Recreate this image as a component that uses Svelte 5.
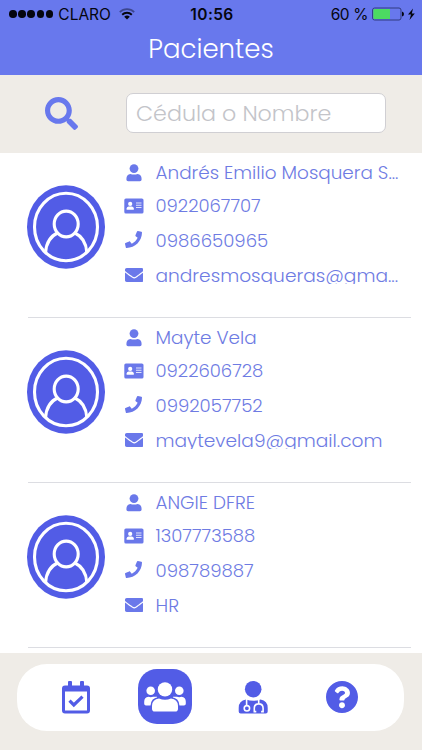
<script>
	let query = $state('')

	const patients = [
		{
			name: 'Andrés Emilio Mosquera S...',
			card: '0922067707',
			phone: '0986650965',
			email: 'andresmosqueras@gma...'
		},
		{
			name: 'Mayte Vela',
			card: '0922606728',
			phone: '0992057752',
			email: 'maytevela9@gmail.com'
		},
		{
			name: 'ANGIE DFRE',
			card: '1307773588',
			phone: '098789887',
			email: 'HR'
		}
	]

	const fields = ['name', 'card', 'phone', 'email']
</script>

<div class="app">
	<header>
		<div class="status">
			<div class="carrier">
				<span class="dots">
					{#each Array(5) as _}<i></i>{/each}
				</span>
				<span class="operator">CLARO</span>
				<svg class="wifi" viewBox="0 0 16 12">
					<path d="M.8 4.1a10.3 10.3 0 0 1 14.4 0" fill="none" stroke="#3c468e" stroke-width="1.7" />
					<path d="M3.2 6.7a6.9 6.9 0 0 1 9.6 0" fill="none" stroke="#05060f" stroke-width="1.9" />
					<path d="M8 11.6L5.2 8.8a4 4 0 0 1 5.6 0z" fill="#05060f" />
				</svg>
			</div>
			<b class="clock">10:56</b>
			<div class="power">
				<span>60 %</span>
				<svg viewBox="0 0 43 14" width="43" height="14">
					<rect x=".6" y="1" width="28.4" height="12" rx="2" fill="none" stroke="#303a80" />
					<path d="M2.5 2H18v10H2.5a1.2 1.2 0 0 1-1.2-1.2V3.2A1.2 1.2 0 0 1 2.5 2z" fill="#4cdb62" />
					<path d="M30 4.5q2 .5 2 2.5t-2 2.5z" fill="#05060f" />
					<path d="M41 1.500L36 7.6h3L37.500 13l5.300-6.600h-3z" fill="#05060f" />
				</svg>
			</div>
		</div>
		<h1>Pacientes</h1>
	</header>

	<div class="search">
		<svg viewBox="0 0 512 512" width="33" height="33">
			<path d="M505 442.7L405.3 343c-4.5-4.5-10.6-7-17-7H372c27.6-35.3 44-79.7 44-128C416 93.1 322.9 0 208 0S0 93.1 0 208s93.1 208 208 208c48.3 0 92.7-16.4 128-44v16.3c0 6.4 2.5 12.5 7 17l99.7 99.7c9.4 9.4 24.6 9.4 33.9 0l28.3-28.3c9.4-9.4 9.4-24.6.1-34zM208 336c-70.7 0-128-57.2-128-128 0-70.7 57.2-128 128-128 70.7 0 128 57.2 128 128 0 70.7-57.2 128-128 128z" />
		</svg>
		<input bind:value={query} placeholder="Cédula o Nombre" />
	</div>

	<main>
		{#each patients as patient}
			<article>
				<svg class="avatar" viewBox="0 0 78 84">
					<ellipse cx="39" cy="42" rx="39" ry="41.7" fill="#525ce6" />
					<g fill="none" stroke="#fff" stroke-width="3.1">
						<ellipse cx="39" cy="42" rx="31.5" ry="33.7" />
						<ellipse cx="39.2" cy="39" rx="12" ry="12.9" />
						<path d="M18.6 67.5C19.2 58 23 51.5 30.5 48M59.8 67.5C59.2 58 55.4 51.5 47.9 48" />
					</g>
				</svg>
				<div class="details">
					{#each fields as field}
						<div class="line {field}">
							{#if field === 'name'}
								<svg viewBox="0 0 16 18" width="16" height="18">
									<circle cx="8" cy="4.6" r="4.4" />
									<path d="M4.4 9.9q3.6 1 7.2 0q4 .6 4 5v.7q0 1.700-1.700 1.700H2.100Q.4 17.300.4 15.600v-.7Q.4 10.500 4.400 9.900z" />
								</svg>
							{:else if field === 'card'}
								<svg viewBox="0 0 20 16" width="20" height="16">
									<rect x=".3" y=".5" width="19.2" height="15" rx="1.6" />
									<g fill="#fff">
										<circle cx="6.2" cy="5.9" r="2.1" />
										<path d="M4.500 8.500h3.400q1.900.4 1.900 2.100v1.200H2.600v-1.200q0-1.700 1.900-2.100z" />
										<path d="M12 4.500h5.500v1.100H12zM12 6.700h5.500v1.100H12zM12 8.900h5.500v1.100H12z" opacity=".8" />
									</g>
								</svg>
							{:else if field === 'phone'}
								<svg viewBox="0 0 512 512" width="17" height="17">
									<path d="M493.4 24.6l-104-24c-11.3-2.6-22.9 3.3-27.5 13.9l-48 112c-4.2 9.8-1.4 21.3 6.9 28l60.6 49.6c-36 76.7-98.9 140.5-177.2 177.2l-49.6-60.6c-6.8-8.3-18.2-11.1-28-6.9l-112 48C3.9 366.5-2 378.1.6 389.4l24 104C27.1 504.2 36.7 512 48 512c256.1 0 464-207.5 464-464 0-11.2-7.7-20.9-18.6-23.4z" />
								</svg>
							{:else}
								<svg viewBox="0 64 512 384" width="18.5" height="14">
									<path d="M502.3 190.8c3.9-3.1 9.7-.2 9.7 4.7V400c0 26.5-21.5 48-48 48H48c-26.5 0-48-21.5-48-48V195.6c0-5 5.7-7.8 9.7-4.7 22.4 17.4 52.1 39.5 154.1 113.6 21.1 15.4 56.7 47.8 92.2 47.6 35.7.3 72-32.8 92.3-47.6 102-74.1 131.6-96.3 154-113.7zM256 320c23.2.4 56.6-29.2 73.4-41.4 132.7-96.3 142.8-104.7 173.4-128.7 5.8-4.5 9.2-11.5 9.2-18.9v-19c0-26.5-21.5-48-48-48H48c-26.5 0-48 21.5-48 48v19c0 7.4 3.4 14.3 9.2 18.9 30.6 23.9 40.7 32.4 173.4 128.7 16.8 12.2 50.2 41.8 73.4 41.4z" />
								</svg>
							{/if}
							<span>{patient[field]}</span>
						</div>
					{/each}
				</div>
			</article>
		{/each}
	</main>

	<footer>
		<nav>
			<button aria-label="Citas">
				<svg viewBox="0 0 30 34" width="30" height="34">
					<path d="M4 5.5h3V2q0-1 1-1h2q1 0 1 1v3.5h8V2q0-1 1-1h2q1 0 1 1v3.5h3q3 0 3 3v22q0 3-3 3H4q-3 0-3-3v-22q0-3 3-3zM4 11.5v19h22v-19z" fill-rule="evenodd" />
					<path d="M8.500 20.700l4.300 4.300 8.700-8.300" fill="none" stroke="#525ce6" stroke-width="3.200" />
				</svg>
			</button>
			<button class="active" aria-label="Pacientes">
				<svg viewBox="0 0 42 30" width="42" height="30">
					<circle cx="6.7" cy="8.8" r="4.3" />
					<circle cx="35.3" cy="8.8" r="4.3" />
					<path d="M4.500 14.700q2.300.9 4.600 0h4v8.800H2Q.2 23.500.2 21.700v-2q0-4.600 4.300-5zM37.500 14.700q-2.300.9-4.600 0h-4v8.800H40q1.800 0 1.800-1.800v-2q0-4.600-4.300-5z" />
					<g stroke="#525ce6" stroke-width="3" paint-order="stroke">
						<path d="M15 16.600q6 2.400 12 0q6.700.8 7 7.100v3q0 2.800-2.800 2.800H10.800Q8 29.500 8 26.700v-3q.3-6.300 7-7.100z" />
						<circle cx="21" cy="7.400" r="7.200" />
					</g>
				</svg>
			</button>
			<button aria-label="Doctores">
				<svg viewBox="0 0 30 34" width="30" height="34">
					<circle cx="15.200" cy="9.200" r="8.300" />
					<path d="M8 19.500q7.500 2.600 14.500 0q7.200 1.100 7.200 8.400v3.600q0 2-2 2h-25q-2 0-2-2v-3.600q0-7.300 7.300-8.400z" />
					<g fill="none" stroke="#fff" stroke-width="1.600">
						<path d="M8.600 18.500v7" />
						<circle cx="8.900" cy="28.300" r="2.700" />
						<path d="M20.700 18.500v5.300M18.300 31.600h-2v-3.300q0-4.400 4.400-4.400t4.400 4.400v3.300h-2" />
					</g>
				</svg>
			</button>
			<button aria-label="Ayuda">
				<svg viewBox="8 8 496 496" width="32" height="32">
					<path d="M504 256c0 136.997-111.043 248-248 248S8 392.997 8 256C8 119.083 119.043 8 256 8s248 111.083 248 248zM262.655 90c-54.497 0-89.255 22.957-116.549 63.758-3.536 5.286-2.353 12.415 2.715 16.258l34.699 26.310c5.205 3.947 12.621 3.008 16.665-2.122 17.864-22.658 30.113-35.797 57.303-35.797 20.429 0 45.698 13.148 45.698 32.958 0 14.976-12.363 22.667-32.534 33.976C247.128 238.528 216 254.941 216 296v4c0 6.627 5.373 12 12 12h56c6.627 0 12-5.373 12-12v-1.333c0-28.462 83.186-29.647 83.186-106.667 0-58.002-60.165-102-116.531-102zM256 338c-25.365 0-46 20.635-46 46 0 25.364 20.635 46 46 46s46-20.636 46-46c0-25.364-20.635-46-46-46z" />
				</svg>
			</button>
		</nav>
	</footer>
</div>

<style>
	:global(body) {
		background: #fff;
	}
	.app {
		display: flex;
		flex-direction: column;
		width: 422px;
		height: 750px;
		overflow: hidden;
		font-family: Poppins, Inter, "Open Sans", sans-serif;
		font-weight: 300;
	}
	svg {
		display: block;
		flex: none;
	}

	header {
		height: 75px;
		flex: none;
		background: #6878ed;
	}
	.status {
		display: grid;
		grid-template-columns: 1fr auto 1fr;
		align-items: center;
		height: 28px;
		padding: 0 7px 0 9px;
		color: #05060f;
		font-family: Inter, sans-serif;
		font-weight: 400;
		font-size: 15.5px;
	}
	.carrier, .power {
		display: flex;
		align-items: center;
	}
	.power {
		justify-content: flex-end;
		gap: 4px;
	}
	.power span {
		letter-spacing: -0.4px;
	}
	.dots {
		display: flex;
		gap: 1.6px;
		margin-right: 5px;
	}
	.dots i {
		width: 7.6px;
		height: 7.6px;
		border-radius: 50%;
		background: #05060f;
	}
	.wifi {
		width: 16px;
		height: 12px;
		margin-left: 8px;
	}
	.clock {
		font-weight: 600;
		letter-spacing: 0.4px;
	}
	h1 {
		margin: 0;
		line-height: 42px;
		text-align: center;
		font-size: 26px;
		font-weight: 300;
		color: #fff;
	}

	.search {
		display: flex;
		align-items: center;
		gap: 48px;
		height: 78px;
		flex: none;
		box-sizing: border-box;
		padding: 0 36px 2px 45px;
		background: #efece7;
		fill: #6878ed;
	}
	input {
		flex: 1;
		min-width: 0;
		height: 40px;
		box-sizing: border-box;
		padding: 0 9px;
		border: 1px solid #d0cfd3;
		border-radius: 7px;
		background: #fff;
		font: inherit;
		font-size: 22.2px;
		outline: none;
	}
	input::placeholder {
		color: #c3c4c9;
		opacity: 1;
	}

	main {
		flex: 1;
		overflow: hidden;
	}
	article {
		display: flex;
		height: 165px;
		box-sizing: border-box;
		margin: 0 11px 0 28px;
		border-bottom: 1px solid #dcdde2;
	}
	.avatar {
		width: 78px;
		height: 84px;
		margin: 32px 0 0 -1.5px;
	}
	.details {
		margin-left: 19px;
		padding-top: 3px;
	}
	.line {
		display: grid;
		grid-template-columns: 20px auto;
		align-items: center;
		justify-items: center;
		justify-content: start;
		column-gap: 12px;
		height: 34px;
		color: #6e7be3;
		fill: #6a78ea;
		font-size: 18.4px;
		white-space: nowrap;
	}
	.name span {
		margin-top: -2px;
	}
	.card {
		height: 31px;
		font-size: 18px;
	}
	.card span {
		margin-top: -1px;
	}
	.phone {
		height: 39px;
		font-size: 18.1px;
	}
	.phone svg {
		margin-bottom: 3px;
	}
	.email {
		height: 30px;
		font-size: 18.6px;
	}
	.email svg {
		margin-left: 1px;
	}
	/* the mail line box is shorter than its glyphs */
	.email span {
		height: 17px;
		line-height: 17px;
		overflow: hidden;
	}

	footer {
		height: 97px;
		flex: none;
		box-sizing: border-box;
		padding: 11px 18px 19px 17px;
		background: #efece7;
	}
	nav {
		display: flex;
		align-items: center;
		height: 67px;
		box-sizing: border-box;
		padding: 0 18px 2px 15px;
		border-radius: 30px;
		background: #fff;
	}
	button {
		display: flex;
		align-items: center;
		justify-content: center;
		width: 54px;
		height: 55px;
		margin: 0 17.5px;
		padding: 0;
		border: 0;
		border-radius: 19px;
		background: none;
		fill: #525ce6;
	}
	.active {
		background: #525ce6;
		fill: #fff;
	}
</style>
